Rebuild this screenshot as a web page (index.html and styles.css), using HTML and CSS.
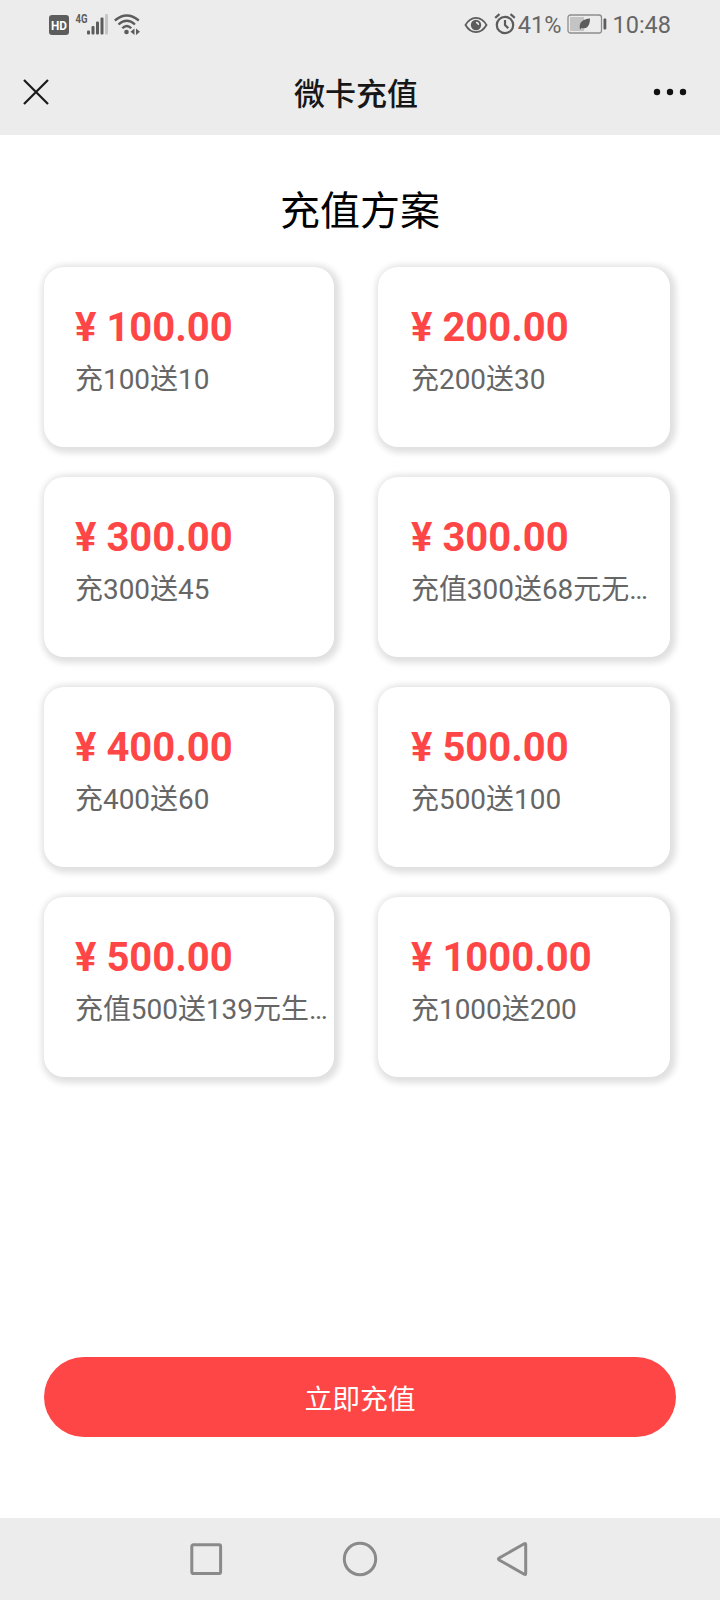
FILE: index.html
```
<!DOCTYPE html>
<html lang="zh-CN">
<head>
    <meta charset="UTF-8">
    <meta name="viewport" content="width=device-width, initial-scale=1.0">
    <title>微卡充值</title>
    <link rel="stylesheet" href="styles.css">
</head>
<body>
    <div class="status-bar">
        <svg class="signals" width="94" height="24" viewBox="0 0 94 24">
            <rect x="0" y="3" width="20" height="20" rx="3" fill="#5c5c5c"/>
            <text class="hd" x="2" y="17.500" textLength="16" lengthAdjust="spacingAndGlyphs">HD</text>
            <text class="net" x="26.500" y="11" textLength="12" lengthAdjust="spacingAndGlyphs">4G</text>
            <g fill="#5c5c5c">
                <rect x="38" y="18.500" width="3" height="4" rx="1"/>
                <rect x="42.500" y="14" width="3" height="8.500" rx="1"/>
                <rect x="47" y="9.500" width="3" height="13" rx="1"/>
                <rect x="51.500" y="5.500" width="3" height="17" rx="1"/>
                <rect x="56" y="2" width="3" height="20.500" rx="1" fill="#c6c6c6"/>
                <circle cx="77.500" cy="20" r="2.300"/>
                <path d="M85.500 16.500v6.500l-4-3.200zM87 16.500v6.500l4-3.200z"/>
            </g>
            <g fill="none" stroke="#5c5c5c" stroke-width="2.300">
                <path d="M65.800 8.500Q77.800-1.500 89.800 8.500"/>
                <path d="M69.500 12.500Q77.800 5 86 12.500"/>
                <path d="M73.300 16.300Q77.800 11.700 82.300 16.300"/>
            </g>
        </svg>
        <div class="status-right">
            <svg class="eye" width="24" height="20" viewBox="0 0 24 20">
                <path d="M1.500 10C7 .5 17 .5 22.500 10C17 19.500 7 19.500 1.500 10z" fill="none" stroke="#5c5c5c" stroke-width="1.800"/>
                <circle cx="12" cy="10" r="5.200" fill="#5c5c5c"/>
                <path d="M12 7.500a2.600 2.600 0 0 1 2.500 2.500" fill="none" stroke="#ececec" stroke-width="1.300"/>
            </svg>
            <svg class="alarm" width="22" height="22" viewBox="0 0 22 22" fill="none" stroke="#5c5c5c" stroke-width="2.200">
                <circle cx="11" cy="12" r="8.200"/>
                <path d="M11 7v5l3.300 3.300M1.200 4.800L5.500 1.200M20.800 4.800L16.500 1.200"/>
            </svg>
            <span class="percent">41%</span>
            <svg class="battery" width="40" height="20" viewBox="0 0 40 20">
                <rect x="1" y="1" width="33.500" height="18" rx="2.500" fill="none" stroke="#8d8d8d" stroke-width="1.300"/>
                <rect x="3" y="3" width="14" height="14" fill="#c4c4c4"/>
                <path d="M13 15.500C11.500 8 16 5 23 4.500C23 12 19.500 15.500 14.500 14L13 15.500z" fill="#5c5c5c"/>
                <rect x="36.500" y="4.500" width="2.800" height="11" rx="1" fill="#5c5c5c"/>
            </svg>
            <span class="time">10:48</span>
        </div>
    </div>

    <header class="header">
        <svg width="26" height="26" viewBox="0 0 26 26" stroke="#1a1a1a" stroke-width="2.200">
            <path d="M1 1L25 25M25 1L1 25"/>
        </svg>
        <h1>微卡充值</h1>
        <svg width="34" height="8" viewBox="0 0 34 8" fill="#111">
            <circle cx="4" cy="4" r="3.200"/>
            <circle cx="17" cy="4" r="3.200"/>
            <circle cx="30" cy="4" r="3.200"/>
        </svg>
    </header>

    <main>
        <h2>充值方案</h2>
        <div class="plans">
            <div class="plan">
                <div class="price">¥ 100.00</div>
                <div class="desc">充100送10</div>
            </div>
            <div class="plan">
                <div class="price">¥ 200.00</div>
                <div class="desc">充200送30</div>
            </div>
            <div class="plan">
                <div class="price">¥ 300.00</div>
                <div class="desc">充300送45</div>
            </div>
            <div class="plan">
                <div class="price">¥ 300.00</div>
                <div class="desc">充值300送68元无…</div>
            </div>
            <div class="plan">
                <div class="price">¥ 400.00</div>
                <div class="desc">充400送60</div>
            </div>
            <div class="plan">
                <div class="price">¥ 500.00</div>
                <div class="desc">充500送100</div>
            </div>
            <div class="plan">
                <div class="price">¥ 500.00</div>
                <div class="desc">充值500送139元生…</div>
            </div>
            <div class="plan">
                <div class="price">¥ 1000.00</div>
                <div class="desc">充1000送200</div>
            </div>
        </div>
        <button type="button" class="submit">立即充值</button>
    </main>

    <nav class="nav-bar">
        <svg width="36" height="36" viewBox="0 0 36 36">
            <rect x="3.800" y="3.800" width="28.800" height="28.800" rx="1.500"/>
        </svg>
        <svg width="36" height="36" viewBox="0 0 36 36">
            <circle cx="18" cy="18" r="15.700"/>
        </svg>
        <svg width="36" height="36" viewBox="0 0 36 36">
            <path d="M29.700 3.600V32.400Q29.700 34 28.200 33.200L3.200 19Q1.700 18 3.200 17L28.200 2.800Q29.700 2 29.700 3.600z"/>
        </svg>
    </nav>
</body>
</html>
```
FILE: styles.css
```
* {
    box-sizing: border-box;
}
body {
    margin: 0;
    height: 1600px;
    display: flex;
    flex-direction: column;
    font-family: Roboto, "Noto Sans CJK SC", sans-serif;
    background-color: #fff;
}
.status-bar {
    height: 50px;
    padding: 0 49px;
    display: flex;
    justify-content: space-between;
    align-items: center;
    background-color: #ececec;
    color: #666;
}
.signals {
    margin-bottom: 2px;
}
.hd {
    font-size: 12px;
    font-weight: bold;
    fill: #fff;
}
.net {
    font-size: 12.5px;
    font-weight: bold;
    fill: #5c5c5c;
}
.status-right {
    display: flex;
    align-items: center;
    font-size: 23.5px;
}
.alarm {
    margin: 0 2px 2px 6px;
}
.battery {
    margin: 0 5px 2px 6px;
}
.header {
    height: 85px;
    padding: 0 33px 2px 23px;
    display: flex;
    justify-content: space-between;
    align-items: center;
    background-color: #ececec;
}
h1 {
    margin: 0 0 0 10px;
    font-size: 31px;
    font-weight: 500;
    color: #171717;
}
main {
    flex: 1;
    display: flex;
    flex-direction: column;
    padding: 47px 44px 81px;
}
h2 {
    margin: 0 0 25px;
    font-size: 40px;
    font-weight: normal;
    line-height: 60px;
    text-align: center;
    color: #000;
}
.plans {
    display: grid;
    grid-template-columns: 290px 292px;
    gap: 30px 44px;
}
.plan {
    height: 180px;
    padding: 36px 0 0 31px;
    border-radius: 20px;
    background-color: #fff;
    box-shadow: 2px 2px 6px 4px #e0e0e0;
}
.plan:nth-child(even) {
    padding-left: 33px;
}
.price {
    font-size: 40px;
    font-weight: bold;
    line-height: 50px;
    color: #ff4646;
}
.desc {
    font-size: 27.95px;
    line-height: 54px;
    white-space: nowrap;
    color: #666;
}
.submit {
    margin-top: auto;
    height: 80px;
    border: none;
    border-radius: 40px;
    background-color: #ff4646;
    color: #fff;
    font-family: inherit;
    font-size: 27.8px;
}
.nav-bar {
    height: 82px;
    padding: 0 188px;
    display: flex;
    justify-content: space-between;
    align-items: center;
    background-color: #ececec;
}
.nav-bar svg {
    fill: none;
    stroke: #8a8a8a;
    stroke-width: 3;
}
```
